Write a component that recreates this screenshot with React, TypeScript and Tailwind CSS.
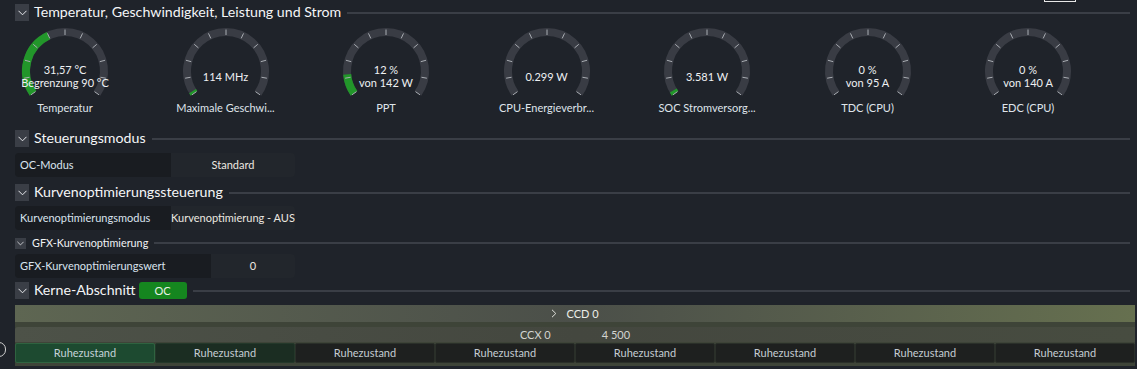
import React from "react";

const FONT = { fontFamily: 'Lato, "Noto Sans", sans-serif' };

function pt(cx: number, cy: number, r: number, deg: number) {
  const a = (deg * Math.PI) / 180;
  return [cx + r * Math.sin(a), cy - r * Math.cos(a)];
}

function arc(cx: number, cy: number, r: number, a0: number, a1: number) {
  const [x0, y0] = pt(cx, cy, r, a0);
  const [x1, y1] = pt(cx, cy, r, a1);
  const large = a1 - a0 > 180 ? 1 : 0;
  return `M ${x0} ${y0} A ${r} ${r} 0 ${large} 1 ${x1} ${y1}`;
}

function Chevron({ small }: { small?: boolean }) {
  return (
    <div
      className={
        small
          ? "w-[11px] h-[11px] bg-[#3a3e46] flex items-center justify-center"
          : "w-[14px] h-[17px] bg-[#3a3e46] flex items-center justify-center"
      }
    >
      <svg width={small ? 7 : 9} height={small ? 5 : 6} viewBox="0 0 9 6">
        <polyline points="0.5,0.8 4.5,4.8 8.5,0.8" fill="none" stroke="#e6e8ec" strokeWidth="1" />
      </svg>
    </div>
  );
}

function Header({ title, small, badge }: { title: string; small?: boolean; badge?: boolean }) {
  return (
    <div className={small ? "flex items-center h-[16px]" : "flex items-center h-[17px]"}>
      <Chevron small={small} />
      <span
        className={
          small
            ? "ml-[6px] text-[10.8px] text-[#f0f2f4] leading-none whitespace-nowrap"
            : "ml-[5px] text-[14.2px] text-[#f4f5f7] leading-none whitespace-nowrap"
        }
      >
        {title}
      </span>
      {badge && (
        <div className="ml-[3px] w-[48px] h-[17px] rounded-[3px] bg-[#15861f] flex items-center justify-center text-[11px] text-[#e8f2e8] leading-none">
          OC
        </div>
      )}
      <div className="ml-[6px] flex-1 h-[2px] bg-[#3a3e46]" />
    </div>
  );
}

type GaugeProps = { l1: string; l2?: string; label: string; fill?: number };

function Gauge({ l1, l2, label, fill }: GaugeProps) {
  const cx = 50;
  const cy = 43;
  const r = 39;
  const ticks = Array.from({ length: 11 }, (_, i) => -125 + i * 25);
  return (
    <div className="w-[100px] flex flex-col items-center">
      <div className="relative w-[100px] h-[72px]">
        <svg width="100" height="72" viewBox="0 0 100 72" className="absolute left-0 top-0">
          <path d={arc(cx, cy, r, -125, 125)} fill="none" stroke="#393c44" strokeWidth="8" />
          {fill !== undefined && (
            <path d={arc(cx, cy, r, -125, fill)} fill="none" stroke="#22962a" strokeWidth="8" />
          )}
          {ticks.map((t) => {
            const [x0, y0] = pt(cx, cy, 36, t);
            const [x1, y1] = pt(cx, cy, 41.5, t);
            return <line key={t} x1={x0} y1={y0} x2={x1} y2={y1} stroke="#a9adb3" strokeWidth="1" />;
          })}
        </svg>
        <div className="absolute left-[-10px] right-[-10px] top-[35px] flex flex-col items-center text-[11px] leading-[13px] text-[#eef0f2] whitespace-nowrap">
          {l2 ? (
            <>
              <span>{l1}</span>
              <span>{l2}</span>
            </>
          ) : (
            <span className="mt-[7px]">{l1}</span>
          )}
        </div>
      </div>
      <div className="h-[16px] text-[11px] leading-[16px] text-[#dfe4ea] whitespace-nowrap">{label}</div>
    </div>
  );
}

function Row({ label, value, leftW }: { label: string; value: string; leftW: number }) {
  return (
    <div className="flex w-[280px] h-[24px] rounded-[4px] overflow-hidden text-[11px]">
      <div
        className="bg-[#191c21] flex items-center pl-[5px] text-[#d9e3ee] whitespace-nowrap"
        style={{ width: leftW }}
      >
        {label}
      </div>
      <div className="flex-1 bg-[#22262c] flex items-center justify-center text-[#ece8e0] whitespace-nowrap">
        {value}
      </div>
    </div>
  );
}

export default function App() {
  const gauges: GaugeProps[] = [
    { l1: "31,57 °C", l2: "Begrenzung 90 °C", label: "Temperatur", fill: -25 },
    { l1: "114  MHz", label: "Maximale Geschwi...", fill: -121 },
    { l1: "12 %", l2: "von 142 W", label: "PPT", fill: -95 },
    { l1: "0.299 W", label: "CPU-Energieverbr..." },
    { l1: "3.581 W", label: "SOC Stromversorg...", fill: -120 },
    { l1: "0 %", l2: "von 95 A", label: "TDC (CPU)" },
    { l1: "0 %", l2: "von 140 A", label: "EDC (CPU)" },
  ];
  const cells = Array.from({ length: 8 }, (_, i) => i);
  return (
    <div className="relative w-[1137px] h-[369px] overflow-hidden bg-[#1f232a]" style={FONT}>
      <div className="absolute left-[1044px] top-[-20px] w-[32px] h-[22px] border border-[#e8e8e8]" />
      <div className="absolute left-[-8px] top-[342px] w-[14px] h-[15px] rounded-full border border-[#d0d0d0]" />

      <div className="pl-[15px] pr-[7px] pt-[4px]">
        <Header title="Temperatur, Geschwindigkeit, Leistung und Strom" />
        <div className="mt-[7px] flex gap-[60.5px]">
          {gauges.map((g, i) => (
            <Gauge key={i} {...g} />
          ))}
        </div>

        <div className="mt-[14px]">
          <Header title="Steuerungsmodus" />
        </div>
        <div className="mt-[6px]">
          <Row label="OC-Modus" value="Standard" leftW={156} />
        </div>

        <div className="mt-[7px]">
          <Header title="Kurvenoptimierungssteuerung" />
        </div>
        <div className="mt-[5px]">
          <Row label="Kurvenoptimierungsmodus" value="Kurvenoptimierung - AUS" leftW={156} />
        </div>

        <div className="mt-[5px]">
          <Header title="GFX-Kurvenoptimierung" small />
        </div>
        <div className="mt-[3px]">
          <Row label="GFX-Kurvenoptimierungswert" value="0" leftW={196} />
        </div>

        <div className="mt-[4px]">
          <Header title="Kerne-Abschnitt" badge />
        </div>

        <div className="mt-[6px] w-[1120px] bg-[#3e4438] pb-[3px] text-[11px]">
          <div className="h-[17px] flex items-center justify-center gap-[9px] bg-gradient-to-r from-[#5e6652] via-[#4b4f49] to-[#66704f] text-[#eceee8]">
            <svg width="6" height="9" viewBox="0 0 6 9">
              <polyline points="1,0.8 4.8,4.5 1,8.2" fill="none" stroke="#e0e2dc" strokeWidth="1" />
            </svg>
            <span className="leading-none">CCD 0</span>
          </div>
          <div className="mt-[5px] h-[15px] flex items-center justify-center gap-[51px] bg-gradient-to-r from-[#4d5248] via-[#44473f] to-[#474c40] text-[#d2d4d0] rounded-tl-[3px]">
            <span className="leading-none">CCX 0</span>
            <span className="leading-none">4 500</span>
          </div>
          <div className="mt-[1px] grid grid-cols-8 h-[20px]">
            {cells.map((i) => (
              <div
                key={i}
                className={
                  i === 0
                    ? "flex items-center justify-center bg-[#1d4a30] border border-[#2f6340] rounded-[2px] text-[#c4d2d8]"
                    : i === 1
                    ? "flex items-center justify-center bg-[#1b2d22] border border-[#24382a] rounded-[2px] text-[#c4ccd2]"
                    : "flex items-center justify-center bg-[#1e201f] border border-[#2a2f29] rounded-[2px] text-[#c4ccd2]"
                }
              >
                Ruhezustand
              </div>
            ))}
          </div>
        </div>
      </div>
    </div>
  );
}
